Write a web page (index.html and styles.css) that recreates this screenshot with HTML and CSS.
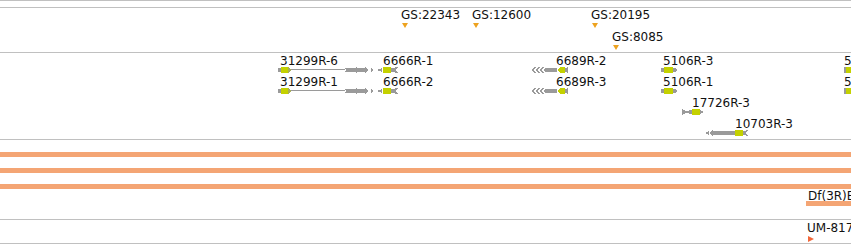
FILE: index.html
```html
<!DOCTYPE html>
<html lang="en">
  <head>
    <meta charset="UTF-8" />
    <meta name="viewport" content="width=device-width, initial-scale=1.0" />
    <title>Tracks</title>
    <link rel="stylesheet" href="styles.css">
  </head>
  <body>
    <div class="browser">
      <div class="track track-top"></div>

      <!-- insertion sites -->
      <div class="track track-gs">
        <div class="feature" style="left: 401px; top: 0px">
          <span class="label">GS:22343</span>
          <span class="pin"></span>
        </div>
        <div class="feature" style="left: 472px; top: 0px">
          <span class="label">GS:12600</span>
          <span class="pin"></span>
        </div>
        <div class="feature" style="left: 591px; top: 0px">
          <span class="label">GS:20195</span>
          <span class="pin"></span>
        </div>
        <div class="feature" style="left: 612px; top: 22px">
          <span class="label">GS:8085</span>
          <span class="pin"></span>
        </div>
      </div>

      <!-- transcripts -->
      <div class="track track-genes">
        <div class="feature" style="left: 278px; top: 1px">
          <span class="label shift">31299R-6</span>
          <svg class="glyph" width="96" height="6">
            <rect x="0" y="1" width="3" height="4" fill="#9a9a9a"/>
            <rect x="3" y="0" width="7" height="6" fill="#c4d100"/>
            <polygon points="10,0 13,3 10,6" fill="#a8ae5a"/>
            <rect x="13" y="2" width="54" height="1" fill="#9a9a9a"/>
            <polygon points="66,1 69,1 71,3 69,5 66,5 68,3" fill="#9a9a9a"/>
            <polygon points="69,1 72,1 74,3 72,5 69,5 71,3" fill="#9a9a9a"/>
            <rect x="73" y="1" width="14" height="4" fill="#9a9a9a"/>
            <polygon points="78,0 81,3 78,6" fill="#9a9a9a"/>
            <polygon points="87,0 91,3 87,6" fill="#9a9a9a"/>
            <polygon points="93,1 96,3 93,5" fill="#9a9a9a"/>
          </svg>
        </div>
        <div class="feature" style="left: 278px; top: 22px">
          <span class="label shift">31299R-1</span>
          <svg class="glyph" width="96" height="6">
            <rect x="0" y="1" width="3" height="4" fill="#9a9a9a"/>
            <rect x="3" y="0" width="7" height="6" fill="#c4d100"/>
            <polygon points="10,0 13,3 10,6" fill="#a8ae5a"/>
            <rect x="13" y="2" width="54" height="1" fill="#9a9a9a"/>
            <polygon points="66,1 69,1 71,3 69,5 66,5 68,3" fill="#9a9a9a"/>
            <polygon points="69,1 72,1 74,3 72,5 69,5 71,3" fill="#9a9a9a"/>
            <rect x="73" y="1" width="14" height="4" fill="#9a9a9a"/>
            <polygon points="78,0 81,3 78,6" fill="#9a9a9a"/>
            <polygon points="87,0 91,3 87,6" fill="#9a9a9a"/>
            <polygon points="93,1 96,3 93,5" fill="#9a9a9a"/>
          </svg>
        </div>

        <div class="feature" style="left: 377px; top: 1px">
          <span class="label shift-lg">6666R-1</span>
          <svg class="glyph" width="21" height="6">
            <polygon points="0,3 5,1 5,5" fill="#9a9a9a"/>
            <rect x="6" y="0" width="8" height="6" fill="#c4d100"/>
            <polygon points="14,1 21,0 19,3 21,6 14,5" fill="#9a9a9a"/>
          </svg>
        </div>
        <div class="feature" style="left: 377px; top: 22px">
          <span class="label shift-lg">6666R-2</span>
          <svg class="glyph" width="21" height="6">
            <polygon points="0,3 5,1 5,5" fill="#9a9a9a"/>
            <rect x="6" y="0" width="8" height="6" fill="#c4d100"/>
            <polygon points="14,1 21,0 19,3 21,6 14,5" fill="#9a9a9a"/>
          </svg>
        </div>

        <div class="feature" style="left: 531px; top: 1px">
          <span class="label" style="margin-left: 25px">6689R-2</span>
          <svg class="glyph" width="37" height="6">
            <polygon points="0,3 3,0 5,0 3,3 5,6 3,6" fill="#9a9a9a"/>
            <polygon points="4,3 7,0 9,0 7,3 9,6 7,6" fill="#9a9a9a"/>
            <polygon points="8,3 11,0 13,0 11,3 13,6 11,6" fill="#9a9a9a"/>
            <polygon points="12,3 15,1 26,1 26,5 15,5" fill="#9a9a9a"/>
            <polygon points="26,3 29,0 34,0 34,6 29,6" fill="#c4d100"/>
            <polygon points="34,1 37,0 37,6 34,5" fill="#9a9a9a"/>
          </svg>
        </div>
        <div class="feature" style="left: 531px; top: 22px">
          <span class="label" style="margin-left: 25px">6689R-3</span>
          <svg class="glyph" width="37" height="6">
            <polygon points="0,3 3,0 5,0 3,3 5,6 3,6" fill="#9a9a9a"/>
            <polygon points="4,3 7,0 9,0 7,3 9,6 7,6" fill="#9a9a9a"/>
            <polygon points="8,3 11,0 13,0 11,3 13,6 11,6" fill="#9a9a9a"/>
            <polygon points="12,3 15,1 26,1 26,5 15,5" fill="#9a9a9a"/>
            <polygon points="26,3 29,0 34,0 34,6 29,6" fill="#c4d100"/>
            <polygon points="34,1 37,0 37,6 34,5" fill="#9a9a9a"/>
          </svg>
        </div>

        <div class="feature" style="left: 661px; top: 1px">
          <span class="label shift">5106R-3</span>
          <svg class="glyph" width="17" height="6">
            <rect x="0" y="1" width="3" height="4" fill="#9a9a9a"/>
            <rect x="3" y="0" width="9" height="6" fill="#c4d100"/>
            <polygon points="12,1 14,1 17,3 14,5 12,5" fill="#9a9a9a"/>
          </svg>
        </div>
        <div class="feature" style="left: 661px; top: 22px">
          <span class="label shift">5106R-1</span>
          <svg class="glyph" width="17" height="6">
            <rect x="0" y="1" width="3" height="4" fill="#9a9a9a"/>
            <rect x="3" y="0" width="9" height="6" fill="#c4d100"/>
            <polygon points="12,1 14,1 17,3 14,5 12,5" fill="#9a9a9a"/>
          </svg>
        </div>

        <div class="feature" style="left: 682px; top: 43px">
          <span class="label" style="margin-left: 10px">17726R-3</span>
          <svg class="glyph" width="22" height="6">
            <polygon points="0,0 4,2 10,1 10,5 4,4 0,6" fill="#9a9a9a"/>
            <rect x="10" y="0" width="8" height="6" fill="#c4d100"/>
            <polygon points="18,1 22,3 18,5" fill="#9a9a9a"/>
          </svg>
        </div>

        <div class="feature" style="left: 705px; top: 64px">
          <span class="label" style="margin-left: 30px">10703R-3</span>
          <svg class="glyph" width="43" height="6">
            <polygon points="0,3 4,1 4,5" fill="#9a9a9a"/>
            <polygon points="4,3 8,0 8,6" fill="#9a9a9a"/>
            <rect x="8" y="1" width="22" height="4" fill="#9a9a9a"/>
            <rect x="30" y="0" width="8" height="6" fill="#c4d100"/>
            <polygon points="38,1 43,0 41,3 43,6 38,5" fill="#9a9a9a"/>
          </svg>
        </div>

        <div class="feature" style="left: 844px; top: 1px">
          <span class="label shift-sm">5106R-2</span>
          <svg class="glyph" width="7" height="6">
            <rect x="0" y="0" width="2" height="6" fill="#9a9a9a"/>
            <rect x="2" y="0" width="5" height="6" fill="#c4d100"/>
          </svg>
        </div>
        <div class="feature" style="left: 844px; top: 22px">
          <span class="label shift-sm">5106R-4</span>
          <svg class="glyph" width="7" height="6">
            <rect x="0" y="0" width="2" height="6" fill="#9a9a9a"/>
            <rect x="2" y="0" width="5" height="6" fill="#c4d100"/>
          </svg>
        </div>
      </div>

      <!-- deficiencies -->
      <div class="track track-df">
        <div class="span-bar"></div>
        <div class="span-bar"></div>
        <div class="span-bar"></div>
        <div class="feature" style="left: 806px; top: 49px">
          <span class="label shift">Df(3R)ED6255</span>
          <span class="df-bar"></span>
        </div>
      </div>

      <!-- rnai -->
      <div class="track track-um">
        <div class="feature" style="left: 807px; top: 1px">
          <span class="label">UM-8177</span>
          <span class="flag"></span>
        </div>
      </div>
    </div>
  </body>
</html>
```

FILE: styles.css
```css
*,
*::before,
*::after {
  margin: 0;
  padding: 0;
  box-sizing: border-box;
}
html,
body {
  width: 100%;
  height: 100%;
  background-color: #fff;
  overflow: hidden;
  font-family: "DejaVu Sans", sans-serif;
}

.browser {
  width: 851px;
  overflow: hidden;
}

.track {
  position: relative;
  border-top: 1px solid #c0c0c0;
  overflow: hidden;
}

.track-top {
  height: 7px;
}

.track-gs {
  height: 45px;
}

.track-genes {
  height: 87px;
}

.track-df {
  height: 80px;
  padding-top: 12px;
}

.track-um {
  height: 25px;
  border-bottom: 1px solid #c0c0c0;
}

.feature {
  position: absolute;
  display: flex;
  flex-direction: column;
  align-items: flex-start;
}

.label {
  font-size: 12px;
  line-height: 14px;
  color: #111;
  white-space: nowrap;
}

.shift {
  margin-left: 2px;
}

.shift-lg {
  margin-left: 6px;
}

.shift-sm {
  margin-left: 0;
}

.glyph {
  display: block;
  margin-top: -1px;
  shape-rendering: crispEdges;
}

.pin {
  width: 0;
  height: 0;
  margin-top: 1px;
  margin-left: 1px;
  border-left: 3px solid transparent;
  border-right: 3px solid transparent;
  border-top: 5px solid #eda21f;
}

.span-bar {
  height: 5px;
  margin-bottom: 11px;
  background-color: #f4a574;
}

.df-bar {
  display: block;
  width: 60px;
  height: 5px;
  margin-top: -2px;
  background-color: #f4a574;
}

.flag {
  width: 0;
  height: 0;
  margin-top: 1px;
  margin-left: 1px;
  border-top: 3px solid transparent;
  border-bottom: 3px solid transparent;
  border-left: 6px solid #f2683a;
}
```
